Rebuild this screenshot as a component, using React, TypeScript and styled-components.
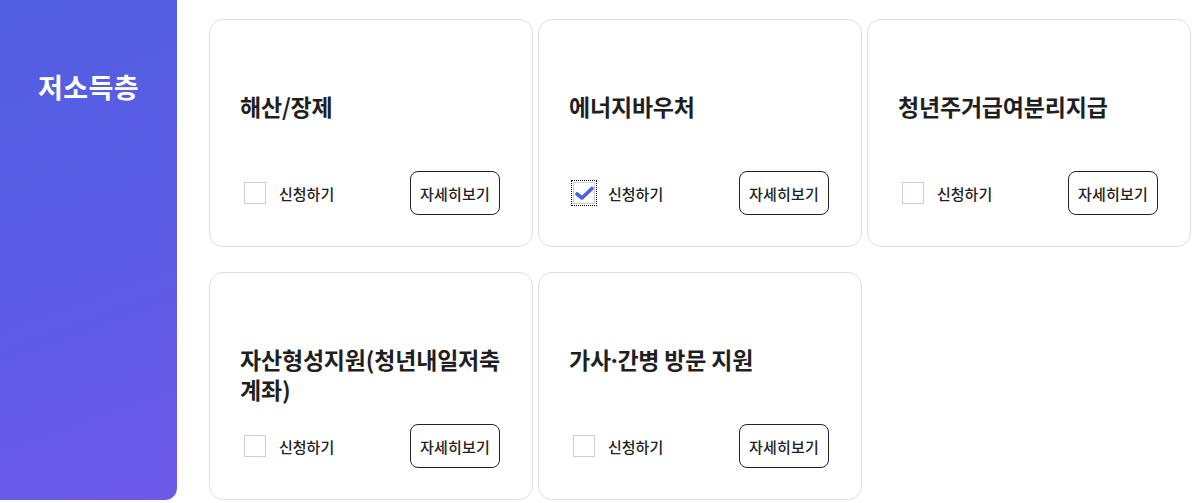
import React, { useState } from "react";
import styled, { createGlobalStyle } from "styled-components";

const Global = createGlobalStyle`
  html, body { margin: 0; padding: 0; background: #ffffff; }
  body { font-family: "Noto Sans CJK KR", "Noto Sans", sans-serif; color: #222; }
  * { box-sizing: border-box; }
`;

const Page = styled.div`
  display: flex;
  align-items: stretch;
`;

const Sidebar = styled.aside`
  width: 177px;
  flex: 0 0 177px;
  background: linear-gradient(160deg, #525fe2 0%, #5b5ce5 50%, #6e5aea 100%);
  border-radius: 0 0 12px 0;
  display: flex;
  justify-content: center;
  padding-top: 68px;
`;

const SideTitle = styled.h2`
  margin: 0;
  color: #fff;
  font-size: 27px;
  line-height: 38px;
  font-weight: 700;
  letter-spacing: 0.4px;
  height: 38px;
`;

const Grid = styled.div`
  display: grid;
  grid-template-columns: repeat(3, 324px);
  grid-auto-rows: 228px;
  column-gap: 5px;
  row-gap: 25px;
  padding: 19px 0 0 32px;
`;

const Card = styled.div`
  border: 1px solid #dedee3;
  border-radius: 14px;
  background: #fff;
  display: flex;
  flex-direction: column;
  padding: 71px 32px 31px 30px;
`;

const Title = styled.h3`
  margin: 0;
  font-size: 23px;
  line-height: 30px;
  font-weight: 700;
  letter-spacing: -0.2px;
  color: #1f1f1f;
  flex: 1;
`;

const Dot = styled.span`
  font-family: "Noto Sans", sans-serif;
  letter-spacing: 0;
`;

const Footer = styled.div`
  display: flex;
  align-items: center;
  justify-content: space-between;
`;

const CheckLabel = styled.label`
  display: flex;
  align-items: center;
  gap: 13px;
  padding-left: 4px;
  font-size: 15px;
  font-weight: 500;
  letter-spacing: 0;
  color: #222;
  cursor: pointer;
`;

const Box = styled.span<{ $focus: boolean }>`
  width: 22px;
  height: 22px;
  border: 1px solid #c9cde3;
  background: #fff;
  display: flex;
  align-items: center;
  justify-content: center;
  outline: ${(p) => (p.$focus ? "1px dotted #000" : "none")};
  outline-offset: 1px;
`;

const DetailButton = styled.button`
  width: 90px;
  height: 44px;
  border: 1px solid #222;
  border-radius: 8px;
  background: #fff;
  font-family: inherit;
  font-size: 15px;
  font-weight: 500;
  color: #222;
  letter-spacing: 0.2px;
  padding: 0;
  cursor: pointer;
`;

const items: { title: React.ReactNode; key: string; checked: boolean }[] = [
  { key: "a", title: "해산/장제", checked: false },
  { key: "b", title: "에너지바우처", checked: true },
  { key: "c", title: "청년주거급여분리지급", checked: false },
  { key: "d", title: "자산형성지원(청년내일저축 계좌)", checked: false },
  {
    key: "e",
    title: (
      <>
        가사<Dot>·</Dot>간병 방문 지원
      </>
    ),
    checked: false,
  },
];

function Item({ title, initial }: { title: React.ReactNode; initial: boolean }) {
  const [checked, setChecked] = useState(initial);
  return (
    <Card>
      <Title>{title}</Title>
      <Footer>
        <CheckLabel onClick={() => setChecked(!checked)}>
          <Box $focus={initial}>
            {checked && (
              <svg width="19" height="15" viewBox="0 0 19 15">
                <path d="M2 8 L7 12 L17 2.5" fill="none" stroke="#4a60e2" strokeWidth="3.6" strokeLinecap="round" strokeLinejoin="round" />
              </svg>
            )}
          </Box>
          신청하기
        </CheckLabel>
        <DetailButton>자세히보기</DetailButton>
      </Footer>
    </Card>
  );
}

export default function App() {
  return (
    <>
      <Global />
      <Page>
        <Sidebar>
          <SideTitle>저소득층</SideTitle>
        </Sidebar>
        <Grid>
          {items.map((it) => (
            <Item key={it.key} title={it.title} initial={it.checked} />
          ))}
        </Grid>
      </Page>
    </>
  );
}
